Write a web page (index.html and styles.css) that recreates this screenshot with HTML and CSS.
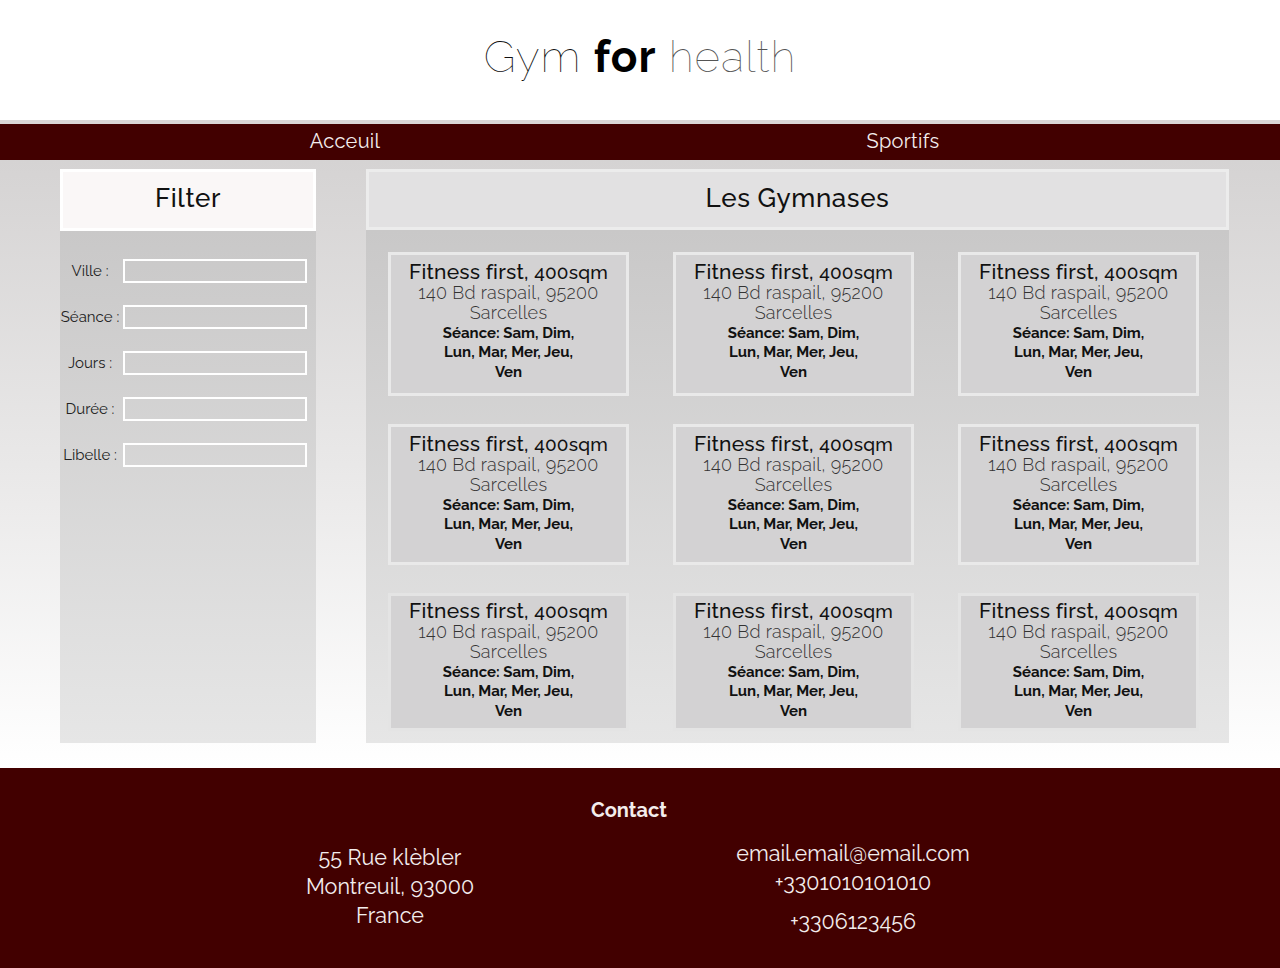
FILE: index.html
```html
<!DOCTYPE html>
<html lang="fr">
<head>
<meta charset="utf-8">
<title>Gym for health</title>
<link rel="stylesheet" href="styles.css">
</head>
<body>
<header class="site-header">
  <h1 class="brand"><span class="brand-thin">Gym</span> <span class="brand-bold">for</span> <span class="brand-light">health</span></h1>
</header>
<nav class="main-nav">
  <a class="nav-item nav-home" href="#">Acceuil</a>
  <a class="nav-item nav-sport" href="#">Sportifs</a>
</nav>
<main class="content">
  <aside class="filter">
    <div class="panel-head filter-head">Filter</div>
    <form class="filter-body">
      <label class="field"><span class="field-label">Ville :</span><input class="field-input" type="text"></label>
      <label class="field"><span class="field-label">Séance :</span><input class="field-input" type="text"></label>
      <label class="field"><span class="field-label">Jours :</span><input class="field-input" type="text"></label>
      <label class="field"><span class="field-label">Durée :</span><input class="field-input" type="text"></label>
      <label class="field"><span class="field-label">Libelle :</span><input class="field-input" type="text"></label>
    </form>
  </aside>
  <section class="gyms">
    <div class="panel-head gyms-head">Les Gymnases</div>
    <div class="gym-grid">
      <article class="card"><div class="card-title">Fitness first, <span class="card-size">400sqm</span></div><div class="card-addr">140 Bd raspail, 95200<br>Sarcelles</div><div class="card-days">Séance: Sam, Dim,<br>Lun, Mar, Mer, Jeu,<br>Ven</div></article>
      <article class="card"><div class="card-title">Fitness first, <span class="card-size">400sqm</span></div><div class="card-addr">140 Bd raspail, 95200<br>Sarcelles</div><div class="card-days">Séance: Sam, Dim,<br>Lun, Mar, Mer, Jeu,<br>Ven</div></article>
      <article class="card"><div class="card-title">Fitness first, <span class="card-size">400sqm</span></div><div class="card-addr">140 Bd raspail, 95200<br>Sarcelles</div><div class="card-days">Séance: Sam, Dim,<br>Lun, Mar, Mer, Jeu,<br>Ven</div></article>
      <article class="card"><div class="card-title">Fitness first, <span class="card-size">400sqm</span></div><div class="card-addr">140 Bd raspail, 95200<br>Sarcelles</div><div class="card-days">Séance: Sam, Dim,<br>Lun, Mar, Mer, Jeu,<br>Ven</div></article>
      <article class="card"><div class="card-title">Fitness first, <span class="card-size">400sqm</span></div><div class="card-addr">140 Bd raspail, 95200<br>Sarcelles</div><div class="card-days">Séance: Sam, Dim,<br>Lun, Mar, Mer, Jeu,<br>Ven</div></article>
      <article class="card"><div class="card-title">Fitness first, <span class="card-size">400sqm</span></div><div class="card-addr">140 Bd raspail, 95200<br>Sarcelles</div><div class="card-days">Séance: Sam, Dim,<br>Lun, Mar, Mer, Jeu,<br>Ven</div></article>
      <article class="card card-last"><div class="card-title">Fitness first, <span class="card-size">400sqm</span></div><div class="card-addr">140 Bd raspail, 95200<br>Sarcelles</div><div class="card-days">Séance: Sam, Dim,<br>Lun, Mar, Mer, Jeu,<br>Ven</div></article>
      <article class="card card-last"><div class="card-title">Fitness first, <span class="card-size">400sqm</span></div><div class="card-addr">140 Bd raspail, 95200<br>Sarcelles</div><div class="card-days">Séance: Sam, Dim,<br>Lun, Mar, Mer, Jeu,<br>Ven</div></article>
      <article class="card card-last"><div class="card-title">Fitness first, <span class="card-size">400sqm</span></div><div class="card-addr">140 Bd raspail, 95200<br>Sarcelles</div><div class="card-days">Séance: Sam, Dim,<br>Lun, Mar, Mer, Jeu,<br>Ven</div></article>
    </div>
  </section>
</main>
<footer class="site-footer">
  <h2 class="footer-title">Contact</h2>
  <div class="footer-cols">
    <div class="footer-addr">55 Rue klèbler<br>Montreuil, 93000<br>France</div>
    <div class="footer-contact">
      <div>email.email@email.com</div>
      <div>+3301010101010</div>
      <div class="footer-phone2">+3306123456</div>
    </div>
  </div>
</footer>
</body>
</html>
```

FILE: styles.css
```css
* { box-sizing: border-box; }

body {
  margin: 0;
  font-family: "Raleway", "Lato", "Noto Sans", sans-serif;
  font-variant-numeric: oldstyle-nums;
  color: #111;
  background: #fff;
}

.site-header {
  height: 120px;
  display: flex;
  align-items: center;
  justify-content: center;
  background: #fff;
}

.brand {
  margin: 0;
  padding-bottom: 8px;
  font-size: 44px;
  font-weight: 400;
  letter-spacing: 1px;
}
.brand-thin { font-weight: 100; color: #111; }
.brand-bold { font-weight: 700; color: #000; }
.brand-light { font-weight: 100; color: #555; }

.main-nav {
  display: grid;
  grid-template-columns: 690px 426px;
  height: 40px;
  border-top: 4px solid #dad6d6;
  background: #420000;
}
.nav-item {
  text-align: center;
  color: #f4eeee;
  font-size: 20px;
  font-weight: 400;
  line-height: 35px;
  text-decoration: none;
  letter-spacing: 0.3px;
}

.content {
  display: flex;
  gap: 50px;
  padding: 9px 51px 25px 60px;
  background: linear-gradient(#d5d3d3 0%, #e9e8e8 50%, #ffffff 100%);
}

.filter {
  width: 256px;
  display: flex;
  flex-direction: column;
  height: 574px;
}

.panel-head {
  height: 62px;
  display: flex;
  align-items: center;
  justify-content: center;
  padding-bottom: 4px;
  font-size: 26px;
  font-weight: 500;
  color: #111;
  letter-spacing: 0.6px;
}

.filter-head {
  background: #faf7f7;
  border: 3px solid #fff;
}

.filter-body {
  flex: 1;
  margin: 0;
  padding: 28px 0 0 0;
  display: flex;
  flex-direction: column;
  gap: 22px;
  background: linear-gradient(#c9c8c8, #e6e6e6);
}

.field {
  display: flex;
  align-items: center;
  height: 24px;
}
.field-label {
  width: 60px;
  margin-right: 3px;
  text-align: center;
  font-size: 15px;
  font-weight: 400;
  color: #222;
  white-space: nowrap;
}
.field-input {
  width: 184px;
  height: 24px;
  border: 2px solid #fff;
  background: transparent;
  margin: 0;
  padding: 0;
  outline: none;
}

.gyms {
  width: 863px;
  height: 574px;
  display: flex;
  flex-direction: column;
}

.gyms-head {
  background: #e2e1e2;
  border: 3px solid #ececec;
}

.gym-grid {
  flex: 1;
  display: grid;
  grid-template-columns: repeat(3, 241px);
  grid-template-rows: 144px 141px 138px;
  column-gap: 44px;
  row-gap: 28px;
  padding: 22px 30px 12px 22px;
  background: linear-gradient(#c9c8c8, #e6e6e6);
}

.card {
  background: #d3d2d3;
  border: 3px solid #e9e9e9;
  text-align: center;
  padding-top: 6px;
}
.card-last {
  padding-top: 4px;
  border-color: #e4e4e4;
}

.card-title {
  font-size: 21px;
  font-weight: 500;
  line-height: 22px;
  color: #111;
  letter-spacing: 0.2px;
}
.card-size {
  font-size: 19px;
}
.card-addr {
  font-size: 18px;
  font-weight: 300;
  line-height: 19.5px;
  color: #333;
  letter-spacing: 0.3px;
}
.card-days {
  font-size: 15px;
  font-weight: 700;
  line-height: 19.5px;
  color: #111;
  margin-top: 1.5px;
}

.site-footer {
  height: 200px;
  background: #420000;
  color: #f3eded;
  padding-top: 30px;
}
.footer-title {
  margin: 0;
  text-align: center;
  font-size: 20px;
  font-weight: 700;
  line-height: 24px;
  padding-right: 22px;
}
.footer-cols {
  display: flex;
  gap: 103px;
  padding-left: 210px;
  margin-top: 17px;
}
.footer-addr {
  width: 360px;
  text-align: center;
  font-size: 21.5px;
  font-weight: 400;
  line-height: 29px;
  padding-top: 4px;
}
.footer-contact {
  width: 360px;
  text-align: center;
  font-size: 21.5px;
  font-weight: 400;
  line-height: 29px;
}
.footer-phone2 {
  margin-top: 10px;
}
```
